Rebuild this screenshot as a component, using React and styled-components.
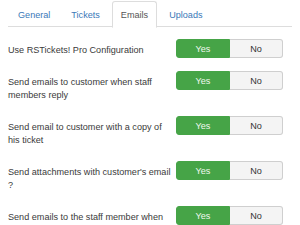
import React, { useState } from 'react';
import styled, { createGlobalStyle } from 'styled-components';

const GlobalStyle = createGlobalStyle`
  html, body {
    margin: 0;
    padding: 0;
    background: #fff;
    overflow: hidden;
  }
  body {
    font-family: "Liberation Sans", Arial, sans-serif;
    color: #333;
  }
`;

const Page = styled.div`
  width: 300px;
  height: 225px;
  padding: 1px 8px 0 8px;
  box-sizing: border-box;
  overflow: hidden;
`;

const TabBar = styled.ul`
  display: flex;
  list-style: none;
  margin: 0 0 12px 0;
  padding: 0 0 0 1px;
  border-bottom: 1px solid #ddd;
  height: 25px;
`;

const Tab = styled.li`
  margin: 0 3px -1px 0;
  padding: 0 8px;
  height: 25px;
  display: flex;
  align-items: center;
  font-size: 9.1px;
  border: 1px solid ${(p) => (p.active ? '#ddd' : 'transparent')};
  border-bottom-color: ${(p) => (p.active ? '#fff' : 'transparent')};
  border-radius: 3px 3px 0 0;
  background: ${(p) => (p.active ? '#fff' : 'transparent')};
  color: ${(p) => (p.active ? '#555' : '#3a78b8')};
  cursor: pointer;
`;

const Row = styled.div`
  display: flex;
  align-items: flex-start;
  margin-bottom: 13.4px;
`;

const Label = styled.div`
  width: 168px;
  padding-top: 4.6px;
  font-size: 9.1px;
  line-height: 13.5px;
  color: #3a3a3a;
  white-space: nowrap;
`;

const Toggle = styled.div`
  display: flex;
  width: 107px;
  height: 19px;
  flex-shrink: 0;
`;

const Choice = styled.div`
  flex: 1;
  display: flex;
  align-items: center;
  justify-content: center;
  font-size: 9.1px;
  box-sizing: border-box;
  background: ${(p) => (p.on ? '#46a447' : '#f4f4f4')};
  color: ${(p) => (p.on ? '#eef8ee' : '#333')};
  border: 1px solid ${(p) => (p.on ? '#46a447' : '#cfcfcf')};
  border-left-width: ${(p) => (p.first ? '1px' : '0')};
  border-radius: ${(p) => (p.first ? '3px 0 0 3px' : '0 3px 3px 0')};
  cursor: pointer;
`;

const tabs = ['General', 'Tickets', 'Emails', 'Uploads'];

// only the lines visible in the panel
const options = [
  ['Use RSTickets! Pro Configuration'],
  ['Send emails to customer when staff', 'members reply'],
  ['Send email to customer with a copy of', 'his ticket'],
  ["Send attachments with customer's email", '?'],
  ['Send emails to the staff member when'],
];

function YesNo() {
  const [yes, setYes] = useState(true);
  return (
    <Toggle>
      <Choice first on={yes ? 1 : 0} onClick={() => setYes(true)}>Yes</Choice>
      <Choice on={yes ? 0 : 1} onClick={() => setYes(false)}>No</Choice>
    </Toggle>
  );
}

export default function App() {
  const [active, setActive] = useState('Emails');
  return (
    <>
      <GlobalStyle />
      <Page>
        <TabBar>
          {tabs.map((t) => (
            <Tab key={t} active={t === active ? 1 : 0} onClick={() => setActive(t)}>
              {t}
            </Tab>
          ))}
        </TabBar>
        {options.map((lines) => (
          <Row key={lines[0]}>
            <Label>
              {lines.map((l, i) => (
                <React.Fragment key={l}>
                  {i > 0 && <br />}
                  {l}
                </React.Fragment>
              ))}
            </Label>
            <YesNo />
          </Row>
        ))}
      </Page>
    </>
  );
}
